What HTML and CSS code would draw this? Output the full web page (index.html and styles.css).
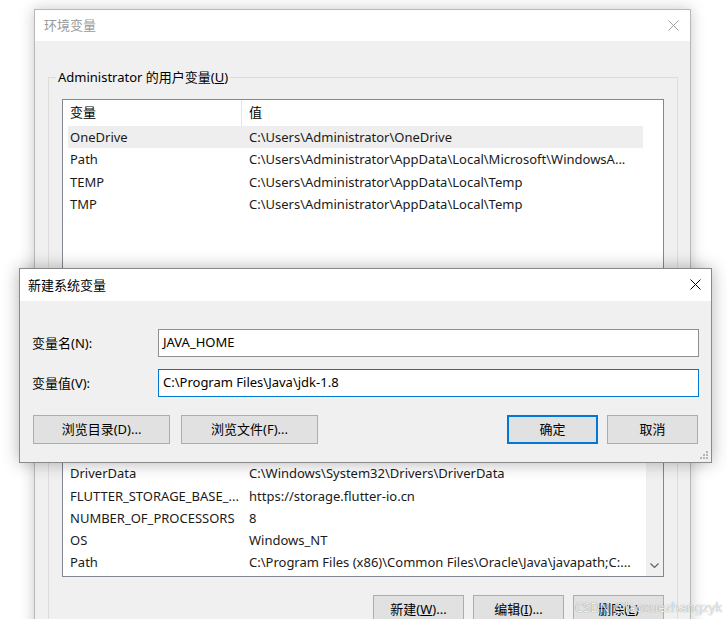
FILE: index.html
```html
<!DOCTYPE html>
<html lang="zh-CN">
<head>
<meta charset="utf-8">
<title>环境变量</title>
<link rel="stylesheet" href="styles.css">
</head>
<body>
<div class="desktop">
  <div class="win main-win">
    <div class="titlebar">
      <span class="title inactive">环境变量</span>
      <svg class="close-x inactive-x" width="11" height="11" viewBox="0 0 11 11"><path d="M0.5 0.5 L10.5 10.5 M10.5 0.5 L0.5 10.5" stroke="currentColor" stroke-width="1" fill="none"/></svg>
    </div>
    <div class="win-body">
      <fieldset class="group user-group">
        <legend>Administrator 的用户变量(<u>U</u>)</legend>
        <div class="listview lv-user">
          <div class="lv-main">
            <div class="lv-header">
              <div class="hc hc1">变量</div>
              <div class="hc hc2">值</div>
            </div>
            <div class="row sel"><div class="c1">OneDrive</div><div class="c2">C:\Users\Administrator\OneDrive</div></div>
            <div class="row"><div class="c1">Path</div><div class="c2">C:\Users\Administrator\AppData\Local\Microsoft\WindowsA...</div></div>
            <div class="row"><div class="c1">TEMP</div><div class="c2">C:\Users\Administrator\AppData\Local\Temp</div></div>
            <div class="row"><div class="c1">TMP</div><div class="c2">C:\Users\Administrator\AppData\Local\Temp</div></div>
          </div>
        </div>
      </fieldset>
      <fieldset class="group sys-group">
        <legend>系统变量(<u>S</u>)</legend>
        <div class="listview lv-sys">
          <div class="lv-main">
            <div class="lv-header">
              <div class="hc hc1">变量</div>
              <div class="hc hc2">值</div>
            </div>
            <div class="row"><div class="c1">ComSpec</div><div class="c2">C:\Windows\system32\cmd.exe</div></div>
            <div class="row"><div class="c1">DriverData</div><div class="c2">C:\Windows\System32\Drivers\DriverData</div></div>
            <div class="row"><div class="c1">FLUTTER_STORAGE_BASE_...</div><div class="c2">https://storage.flutter-io.cn</div></div>
            <div class="row"><div class="c1">NUMBER_OF_PROCESSORS</div><div class="c2">8</div></div>
            <div class="row"><div class="c1">OS</div><div class="c2">Windows_NT</div></div>
            <div class="row"><div class="c1">Path</div><div class="c2">C:\Program Files (x86)\Common Files\Oracle\Java\javapath;C:...</div></div>
          </div>
          <div class="vscroll">
            <svg class="sb-arrow" width="9" height="6" viewBox="0 0 9 6"><path d="M0.5 0.5 L4.5 4.5 L8.5 0.5" stroke="#606060" stroke-width="1.2" fill="none"/></svg>
          </div>
        </div>
        <div class="btnrow">
          <button class="btn small">新建(<u>W</u>)...</button>
          <button class="btn small">编辑(<u>I</u>)...</button>
          <button class="btn small">删除(<u>L</u>)</button>
        </div>
      </fieldset>
    </div>
  </div>

  <div class="win dialog">
    <div class="titlebar dlg-title">
      <span class="title">新建系统变量</span>
      <svg class="close-x" width="11" height="11" viewBox="0 0 11 11"><path d="M0.5 0.5 L10.5 10.5 M10.5 0.5 L0.5 10.5" stroke="currentColor" stroke-width="1" fill="none"/></svg>
    </div>
    <div class="dlg-body">
      <div class="field">
        <label class="lbl">变量名(N):</label>
        <div class="input">JAVA_HOME</div>
      </div>
      <div class="field">
        <label class="lbl">变量值(V):</label>
        <div class="input focus">C:\Program Files\Java\jdk-1.8</div>
      </div>
      <div class="dlg-buttons">
        <button class="btn wide first"><span>浏览目录(D)...</span></button>
        <button class="btn wide"><span>浏览文件(F)...</span></button>
        <button class="btn small default push"><span>确定</span></button>
        <button class="btn small last"><span>取消</span></button>
      </div>
    </div>
    <svg class="grip" width="9" height="9" viewBox="0 0 9 9">
      <rect x="7" y="1" width="2" height="2" fill="#b5b5b5"/>
      <rect x="4" y="4" width="2" height="2" fill="#b5b5b5"/>
      <rect x="7" y="4" width="2" height="2" fill="#b5b5b5"/>
      <rect x="1" y="7" width="2" height="2" fill="#b5b5b5"/>
      <rect x="4" y="7" width="2" height="2" fill="#b5b5b5"/>
      <rect x="7" y="7" width="2" height="2" fill="#b5b5b5"/>
    </svg>
  </div>

  <div class="watermark">CSDN @laoxuezhangzyk</div>
</div>
</body>
</html>
```
FILE: styles.css
```css
* { box-sizing: border-box; }
html, body {
  margin: 0;
  padding: 0;
  background: #ffffff;
}
body {
  font-family: "Noto Sans", "Noto Sans CJK SC", sans-serif;
  font-size: 13px;
  color: #1a1a1a;
}
.desktop {
  position: relative;
  width: 727px;
  height: 619px;
  overflow: hidden;
  background: #ffffff;
}
.win {
  position: absolute;
  border: 1px solid #b8b8b8;
  background: #f0f0f0;
  box-shadow: 0 0 14px rgba(0, 0, 0, 0.22);
}
.main-win {
  left: 34px;
  top: 9px;
  width: 657px;
  height: 680px;
}
.titlebar {
  height: 31px;
  background: #ffffff;
  display: flex;
  align-items: center;
  justify-content: space-between;
  padding: 0 11px 1px 9px;
}
.title {
  font-size: 13px;
  line-height: 18px;
  color: #000;
}
.title.inactive { color: #9a9a9a; }
.close-x { color: #000; display: block; }
.close-x.inactive-x { color: #a0a0a0; }

.win-body {
  padding: 0 12px 0 13px;
}
.group {
  margin: 0;
  border: 1px solid #dcdcdc;
  min-inline-size: 0;
}
.group legend {
  padding: 0 2px;
  margin-left: -6px;
  line-height: 18px;
  font-size: 13px;
  color: #000;
}
.user-group {
  margin-top: 27px;
  padding: 13px 13px 49px 13px;
}
.sys-group {
  margin-top: 32px;
  padding: 13px 13px 40px 13px;
}
.listview {
  border: 1px solid #828790;
  background: #ffffff;
  display: flex;
  overflow: hidden;
}
.lv-user { height: 201px; }
.lv-sys { height: 164px; }
.lv-main {
  width: 580px;
  flex: none;
}
.lv-header {
  display: flex;
  height: 26px;
  line-height: 25px;
  background: #ffffff;
}
.hc { white-space: nowrap; color: #000; }
.hc1 {
  width: 179px;
  padding-left: 7px;
  border-right: 1px solid #e5e5e5;
}
.hc2 {
  flex: 1;
  padding-left: 7px;
}
.row {
  display: flex;
  margin-left: 5px;
  width: 575px;
  height: 22.25px;
  line-height: 22.25px;
  white-space: nowrap;
}
.row.sel { background: #eeeeee; }
.row .c1 {
  width: 174px;
  flex: none;
  padding-left: 2px;
  overflow: hidden;
}
.row .c2 {
  flex: 1;
  padding-left: 7px;
  overflow: hidden;
}
.lv-sys .lv-main { width: 582px; }
.vscroll {
  width: 17px;
  flex: none;
  margin-left: auto;
  background: #f0f0f0;
  display: flex;
  align-items: flex-end;
  justify-content: center;
  padding-bottom: 7px;
}
.sb-arrow { display: block; }

.btnrow {
  display: flex;
  justify-content: flex-end;
  gap: 9px;
  margin-top: 18px;
}
.btn {
  font-family: "Noto Sans", "Noto Sans CJK SC", sans-serif;
  font-size: 13px;
  color: #000;
  height: 29px;
  background: #e1e1e1;
  border: 1px solid #adadad;
  padding: 0 0 1px 0;
  line-height: 18px;
  display: flex;
  align-items: center;
  justify-content: center;
  white-space: nowrap;
}
.btn.small { width: 91px; }
.btn.wide { width: 137px; }
.btn.default {
  border: 2px solid #0078d7;
}

.dialog {
  left: 19px;
  top: 268px;
  width: 693px;
  height: 195px;
  border-color: #8a8a8a;
  box-shadow: 0 0 16px rgba(0, 0, 0, 0.3);
}
.dlg-title {
  height: 32px;
  padding: 0 10px 1px 8px;
}
.dlg-body {
  padding: 28px 12px 0 12px;
  display: flex;
  flex-direction: column;
  gap: 12px;
}
.field {
  display: flex;
  align-items: center;
  height: 28px;
}
.lbl {
  width: 126px;
  flex: none;
  color: #000;
  padding-bottom: 1px;
}
.input {
  flex: 1;
  height: 28px;
  border: 1px solid #8f8f8f;
  background: #ffffff;
  padding-left: 4px;
  line-height: 24px;
  color: #000;
  white-space: nowrap;
}
.input.focus { border-color: #0078d7; }
.dlg-buttons {
  display: flex;
  align-items: center;
  margin-top: 6px;
}
.btn.first { margin-left: 1px; margin-right: 11px; }
.btn.push { margin-left: auto; margin-right: 9px; }
.btn.last { margin-right: 1px; }
.grip {
  position: absolute;
  right: 3px;
  bottom: 3px;
}

.watermark {
  position: absolute;
  left: 575px;
  top: 598px;
  font-size: 13px;
  line-height: 18px;
  color: rgba(255, 255, 255, 0.9);
  text-shadow: 0 0 1px rgba(0, 0, 0, 0.55);
  white-space: nowrap;
}
```
